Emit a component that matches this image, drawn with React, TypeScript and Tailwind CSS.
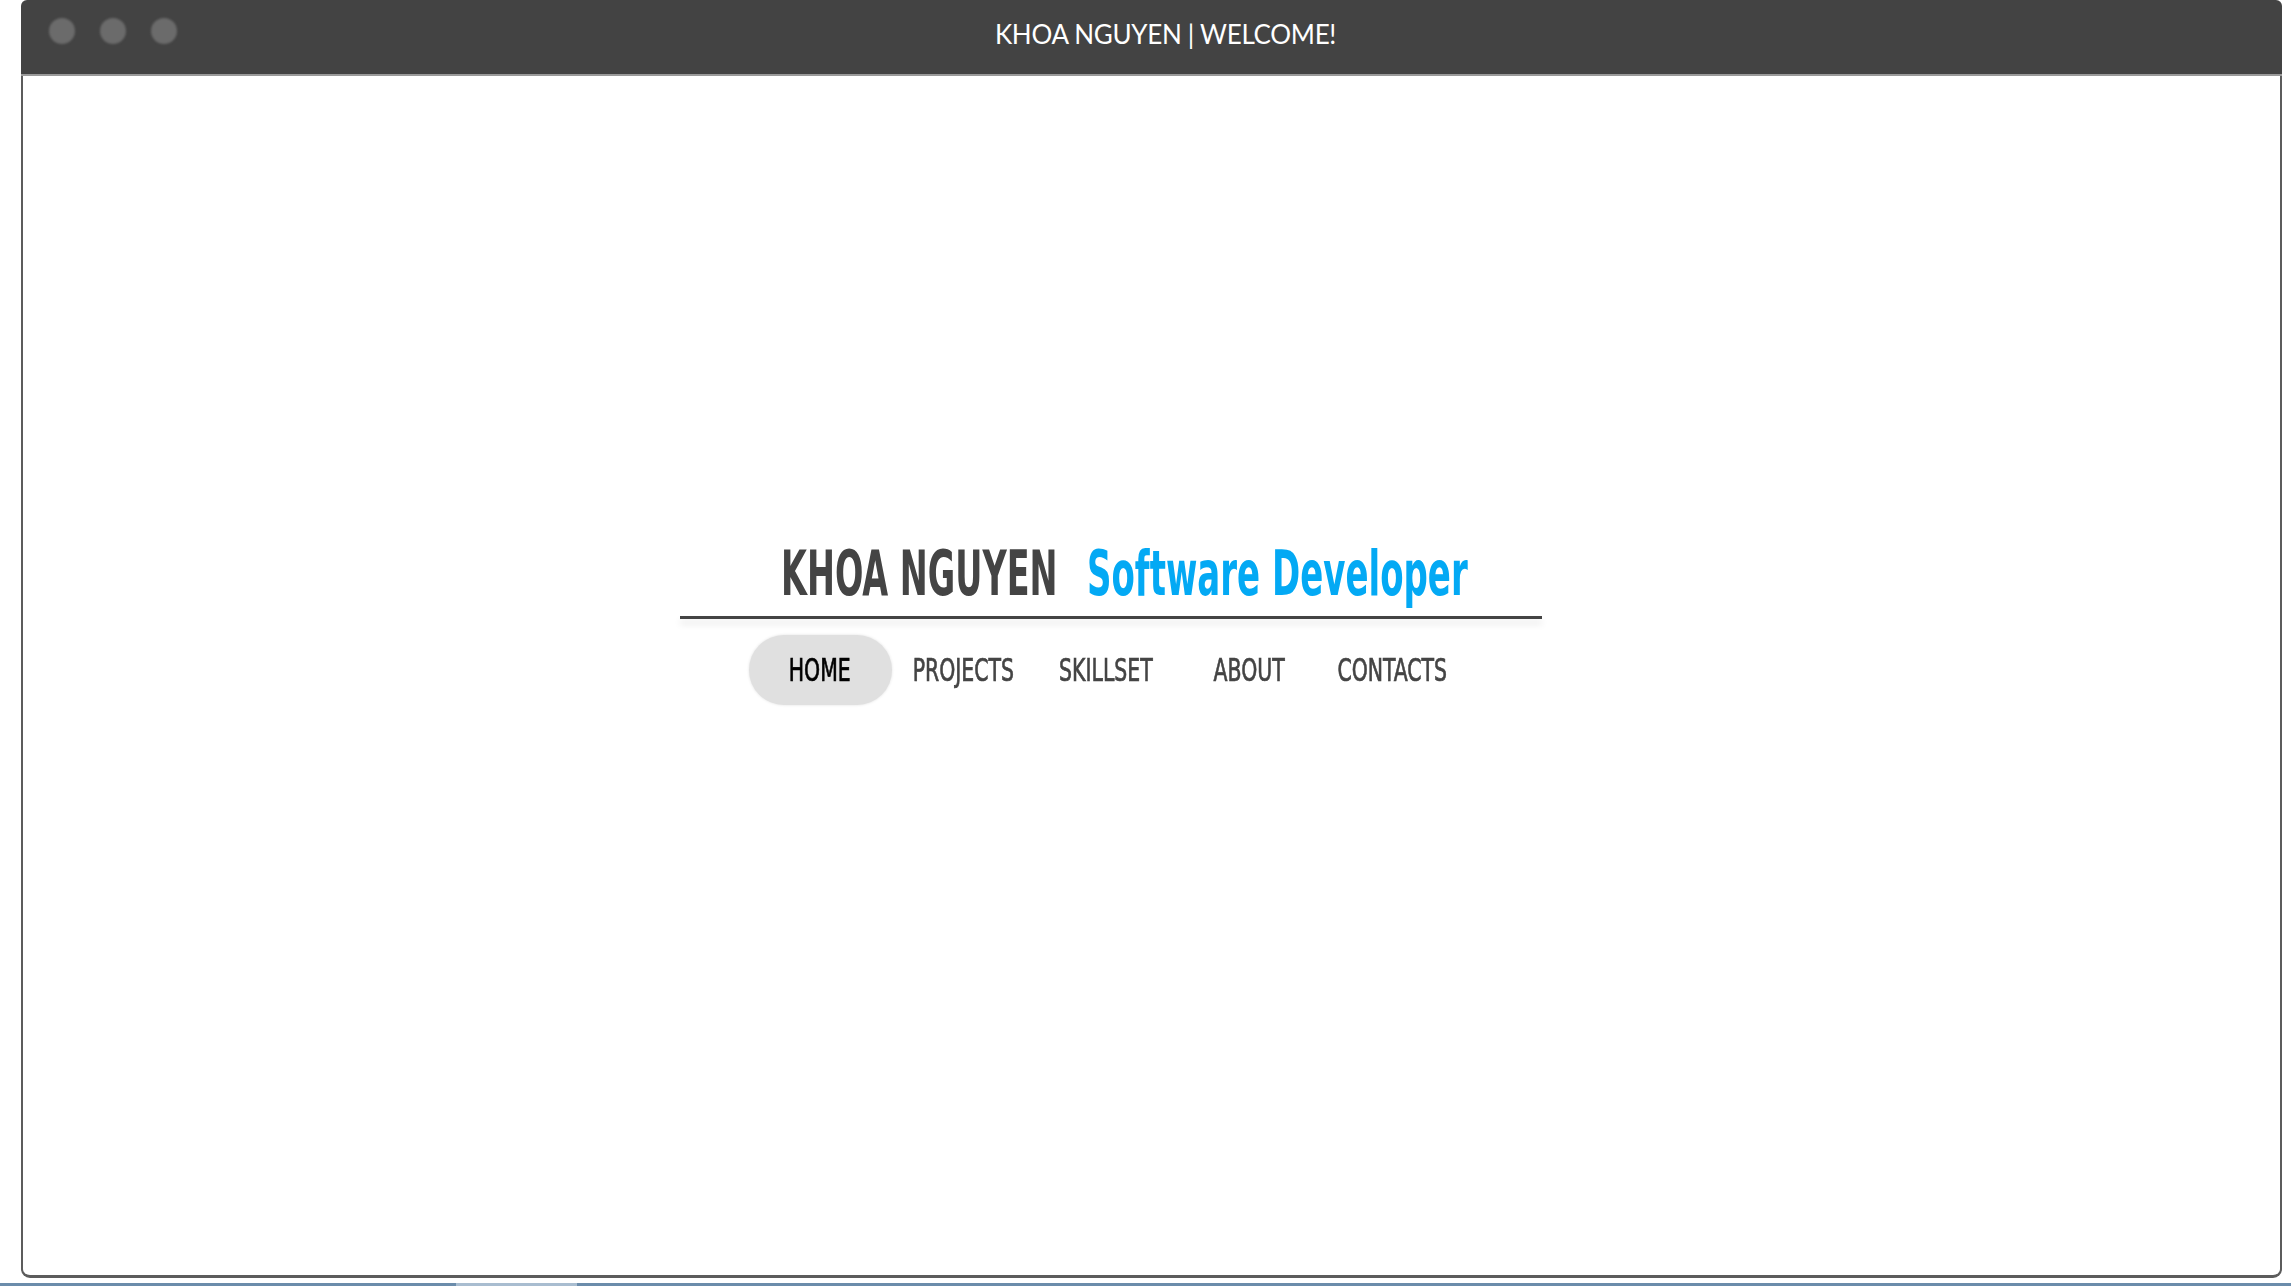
const navItems = ["HOME", "PROJECTS", "SKILLSET", "ABOUT", "CONTACTS"];

const condensed = {
  fontFamily: "'DejaVu Sans Condensed', 'Liberation Sans', sans-serif",
};

function Squeezed({ text, width, scale }: { text: string; width: string; scale: string }) {
  return (
    <span className={`inline-block whitespace-nowrap ${width}`}>
      <span className={`inline-block origin-left ${scale}`}>{text}</span>
    </span>
  );
}

export default function App() {
  return (
    <div className="h-[1286px] w-full flex flex-col bg-white overflow-hidden">
      <div className="ml-[21px] w-[2261px] h-[1278px] flex flex-col">
        {/* title bar */}
        <div className="relative h-[76px] bg-[#434343] rounded-tl-[6px] rounded-tr-[6px] flex items-center justify-center border-b-2 border-[#9a9a9a]">
          <div className="absolute left-[28px] top-[18px] flex gap-[25px]">
            <span className="w-[26px] h-[26px] rounded-full bg-[#6b6b6b] blur-[1px]" />
            <span className="w-[26px] h-[26px] rounded-full bg-[#6b6b6b] blur-[1px]" />
            <span className="w-[26px] h-[26px] rounded-full bg-[#6b6b6b] blur-[1px]" />
          </div>
          <span
            className="text-white text-[26px] tracking-[-0.3px] ml-[28px] -mt-[6px]"
            style={{ fontFamily: "Lato, 'Open Sans', sans-serif" }}
          >
            KHOA NGUYEN | WELCOME!
          </span>
        </div>

        {/* page body */}
        <div className="flex-1 border-x-2 border-b-[3px] border-[#5c5c5c] rounded-b-[9px] bg-white flex justify-center">
          <div className="w-[862px] mr-[82px] pt-[466px] flex flex-col" style={condensed}>
            <div className="flex pl-[101px] text-[63px] leading-none font-bold">
              <span className="text-[#444]">
                <Squeezed text="KHOA NGUYEN" width="w-[306px]" scale="scale-x-[0.59]" />
              </span>
              <span className="text-[#03a9f4]">
                <Squeezed text="Software Developer" width="w-[380px]" scale="scale-x-[0.6]" />
              </span>
            </div>
            <div className="mt-[11px] h-[3px] bg-[#444] shadow-[0_5px_7px_rgba(0,0,0,0.12)]" />
            <div className="flex pl-[69px] mt-[16px] [-webkit-text-stroke:0.7px]">
              {navItems.map((item, i) => (
                <div
                  key={item}
                  className={`w-[143px] h-[70px] flex items-center justify-center text-[32px] ${
                    i === 0
                      ? "bg-[#e0e0e0] rounded-full text-black shadow-[0_0_3px_rgba(0,0,0,0.12)]"
                      : "text-[#444]"
                  }`}
                >
                  <span className="inline-block scale-x-[0.71]">{item}</span>
                </div>
              ))}
            </div>
          </div>
        </div>
      </div>
      <div className="mt-auto h-[3px] bg-[#6b8cab] flex">
        <div className="ml-[456px] w-[121px] bg-[#a9bdd0]" />
      </div>
    </div>
  );
}
